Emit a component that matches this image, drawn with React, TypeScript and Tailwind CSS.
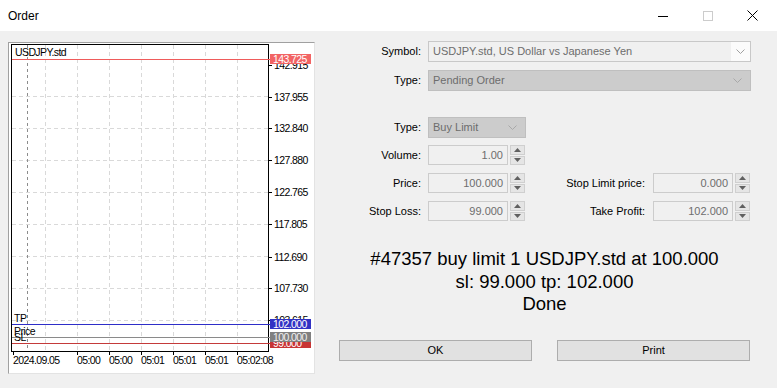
import React from 'react';

const vGrid = [45, 77, 109, 141, 173, 205, 237];
const hGrid = [96, 128, 160, 192, 224, 256, 288, 320];
const priceTicks: [string, number][] = [
    ['142.915', 65],
    ['137.955', 97],
    ['132.840', 128],
    ['127.880', 160],
    ['122.765', 192],
    ['117.805', 224],
    ['112.690', 257],
    ['107.730', 288],
    ['103.615', 320],
];
const timeTicks: [string, number][] = [
    ['2024.09.05', 13],
    ['05:00', 77],
    ['05:00', 109],
    ['05:01', 141],
    ['05:01', 173],
    ['05:01', 205],
    ['05:02:08', 237],
];

function Chart() {
    return (
        <div className="mt-[1px] w-[307px] h-[332px] border border-t-[#a0a0a0] border-l-[#a0a0a0] border-r-[#e3e3e3] border-b-[#e3e3e3] bg-white">
            <svg width="305" height="330" viewBox="9 43 305 330" fontFamily="'Liberation Sans', Arial, sans-serif" fontSize="10.5">
                {/* grid */}
                {vGrid.map((x) => (
                    <line key={'v' + x} x1={x + 0.5} y1={45} x2={x + 0.5} y2={351} stroke="#d9d9d9" strokeDasharray="4 3" />
                ))}
                {hGrid.map((y) => (
                    <line key={'h' + y} x1={12} y1={y + 0.5} x2={268} y2={y + 0.5} stroke="#d9d9d9" strokeDasharray="4 3" />
                ))}
                <line x1={27.5} y1={45} x2={27.5} y2={351} stroke="#8c8c8c" strokeDasharray="3 3" />

                {/* frame */}
                <rect x={11.5} y={44.5} width={257} height={307} fill="none" stroke="#000" />

                {/* price axis */}
                {priceTicks.map(([t, y]) => (
                    <g key={t}>
                        <line x1={268} y1={y + 0.5} x2={272} y2={y + 0.5} stroke="#000" />
                        <text x={274} y={y + 4} letterSpacing="-0.6" fill="#000">{t}</text>
                    </g>
                ))}

                {/* time axis */}
                {timeTicks.map(([t, x], i) => (
                    <g key={i}>
                        <line x1={x + 0.5} y1={351} x2={x + 0.5} y2={355} stroke="#000" />
                        <text x={x} y={364} letterSpacing="-0.6" fill="#000">{t}</text>
                    </g>
                ))}

                <text x={15} y={56} letterSpacing="-0.6" fill="#000">USDJPY.std</text>

                {/* current price */}
                <line x1={12} y1={59.5} x2={270} y2={59.5} stroke="#ef5b5b" />
                <rect x={270} y={54} width={41} height={10} fill="#f26464" />
                <text x={273} y={63} letterSpacing="-0.6" fill="#fff">143.725</text>

                {/* order levels */}
                <line x1={12} y1={324.5} x2={270} y2={324.5} stroke="#2e2ec8" />
                <line x1={12} y1={337.5} x2={270} y2={337.5} stroke="#8a8a8a" />
                <line x1={12} y1={343.5} x2={270} y2={343.5} stroke="#c43a3a" />
                <text x={14} y={322} letterSpacing="-0.4" fill="#000">TP</text>
                <text x={14} y={335} letterSpacing="-0.6" fill="#000">Price</text>
                <text x={14} y={341} letterSpacing="-0.6" fill="#000">SL</text>

                <rect x={270} y={319} width={41} height={10} fill="#3232c4" />
                <text x={273} y={328} letterSpacing="-0.6" fill="#fff">102.000</text>
                <rect x={270} y={337} width={41} height={11} fill="#c83434" />
                <text x={273} y={347} letterSpacing="-0.6" fill="#fff">99.000</text>
                <rect x={270} y={332} width={41} height={10} fill="#808080" />
                <text x={273} y={341} letterSpacing="-0.6" fill="#f0f0f0">100.000</text>
            </svg>
        </div>
    );
}

function Chevron({ color = '#a0a0a0' }: { color?: string }) {
    return (
        <svg width="9" height="5" viewBox="0 0 9 5">
            <path d="M0.5 0.5 L4.5 4.5 L8.5 0.5" fill="none" stroke={color} strokeWidth={1} />
        </svg>
    );
}

function Spinner() {
    return (
        <div className="w-[15px] h-[20px] flex flex-col gap-[1px]">
            <div className="flex-1 bg-[#e5e5e5] border border-[#cfcfcf] flex items-center justify-center">
                <svg width="7" height="4" viewBox="0 0 7 4"><path d="M0 4 L3.5 0 L7 4 Z" fill="#606060" /></svg>
            </div>
            <div className="flex-1 bg-[#e5e5e5] border border-[#cfcfcf] flex items-center justify-center">
                <svg width="7" height="4" viewBox="0 0 7 4"><path d="M0 0 L3.5 4 L7 0 Z" fill="#606060" /></svg>
            </div>
        </div>
    );
}

function NumField({ value }: { value: string }) {
    return (
        <div className="flex items-center gap-[2px]">
            <div className="w-[80px] h-[20px] border border-[#cccccc] bg-[#f0f0f0] flex items-center justify-end pr-[4px] text-[#6d6d6d]">
                {value}
            </div>
            <Spinner />
        </div>
    );
}

function Label({ children, w = 'w-[91px]' }: { children: React.ReactNode; w?: string }) {
    return <div className={`${w} text-right shrink-0`}>{children}</div>;
}

function OrderForm() {
    return (
        <div className="ml-[15px] w-[421px] flex flex-col">
            {/* Symbol */}
            <div className="flex items-center gap-[7px] h-[21px]">
                <Label>Symbol:</Label>
                <div className="w-[323px] h-[21px] border border-[#c8c8c8] flex">
                    <div className="flex-1 bg-[#f0f0f0] flex items-center pl-[4px] text-[#6d6d6d]">USDJPY.std, US Dollar vs Japanese Yen</div>
                    <div className="w-[19px] bg-[#fbfbfb] flex items-center justify-center">
                        <Chevron />
                    </div>
                </div>
            </div>

            {/* Type */}
            <div className="flex items-center gap-[7px] h-[21px] mt-[8px]">
                <Label>Type:</Label>
                <div className="w-[323px] h-[21px] border border-[#bfbfbf] bg-[#cccccc] flex items-center pl-[4px] pr-[8px] text-[#6d6d6d]">
                    <span className="flex-1">Pending Order</span>
                    <Chevron color="#a8a8a8" />
                </div>
            </div>

            {/* Order type */}
            <div className="flex items-center gap-[7px] h-[21px] mt-[26px]">
                <Label>Type:</Label>
                <div className="w-[98px] h-[21px] border border-[#bfbfbf] bg-[#cccccc] flex items-center pl-[4px] pr-[8px] text-[#6d6d6d]">
                    <span className="flex-1">Buy Limit</span>
                    <Chevron color="#a8a8a8" />
                </div>
            </div>

            {/* Volume */}
            <div className="flex items-center gap-[7px] h-[20px] mt-[7px]">
                <Label>Volume:</Label>
                <NumField value="1.00" />
            </div>

            {/* Price */}
            <div className="flex items-center gap-[7px] h-[20px] mt-[8px]">
                <Label>Price:</Label>
                <NumField value="100.000" />
                <div className="flex items-center gap-[8px]">
                    <Label w="w-[113px]">Stop Limit price:</Label>
                    <NumField value="0.000" />
                </div>
            </div>

            {/* Stop Loss */}
            <div className="flex items-center gap-[7px] h-[20px] mt-[8px]">
                <Label>Stop Loss:</Label>
                <NumField value="99.000" />
                <div className="flex items-center gap-[8px]">
                    <Label w="w-[113px]">Take Profit:</Label>
                    <NumField value="102.000" />
                </div>
            </div>

            {/* Result */}
            <div className="ml-[9px] w-[411px] mt-[27px] text-center text-[18.5px] leading-[22.5px] text-black">
                <div>#47357 buy limit 1 USDJPY.std at 100.000</div>
                <div>sl: 99.000 tp: 102.000</div>
                <div>Done</div>
            </div>

            {/* Buttons */}
            <div className="ml-[9px] w-[411px] mt-[24px] flex gap-[25px]">
                <button className="w-[193px] h-[21px] bg-[#e1e1e1] border border-[#adadad] text-[11px]">OK</button>
                <button className="w-[193px] h-[21px] bg-[#e1e1e1] border border-[#adadad] text-[11px]">Print</button>
            </div>
        </div>
    );
}

export default function App() {
    return (
        <div className="w-[777px] h-[388px] bg-[#f0f0f0] overflow-hidden font-['Liberation_Sans',Arial,sans-serif] text-[11px] text-black">
            {/* Title bar */}
            <div className="h-[31px] bg-white flex items-center">
                <span className="pl-[8px] text-[12px]">Order</span>
                <div className="ml-auto mr-[2px] flex h-full">
                    <div className="w-[45px] flex items-center justify-center">
                        <svg width="10" height="10" viewBox="0 0 10 10"><line x1="0" y1="5.5" x2="10" y2="5.5" stroke="#000" /></svg>
                    </div>
                    <div className="w-[45px] flex items-center justify-center">
                        <svg width="10" height="10" viewBox="0 0 10 10"><rect x="0.5" y="0.5" width="9" height="9" fill="none" stroke="#cccccc" /></svg>
                    </div>
                    <div className="w-[45px] flex items-center justify-center">
                        <svg width="11" height="11" viewBox="0 0 11 11"><path d="M0.5 0.5 L10.5 10.5 M10.5 0.5 L0.5 10.5" stroke="#000" /></svg>
                    </div>
                </div>
            </div>

            <div className="flex pt-[10px] pl-[8px]">
                <Chart />
                <OrderForm />
            </div>
        </div>
    );
}
